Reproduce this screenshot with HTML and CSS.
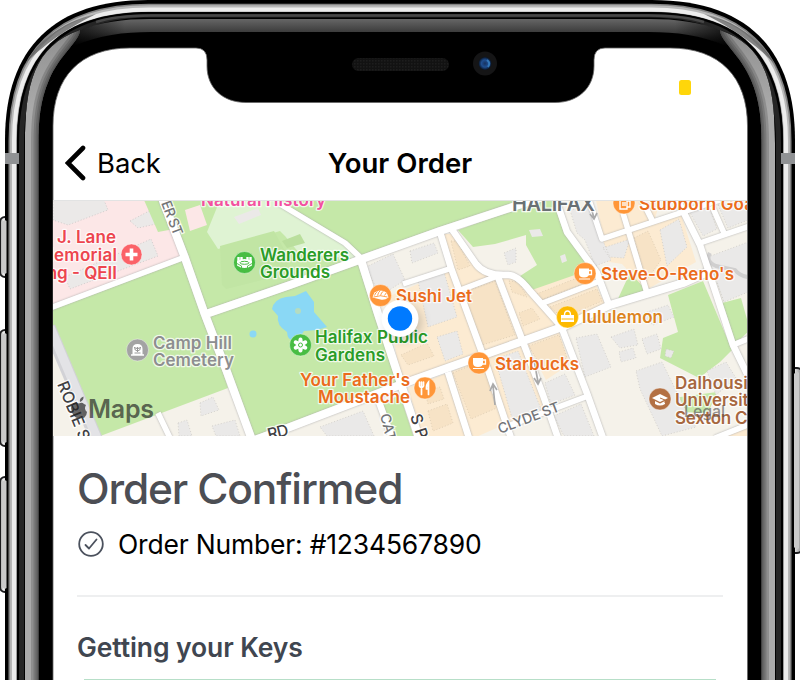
FILE: index.html
```html
<!DOCTYPE html>
<html lang="en">
<head>
<meta charset="utf-8">
<title>Your Order</title>
<link rel="stylesheet" href="styles.css">
</head>
<body>
<main class="device">
  <svg class="frame" viewBox="0 0 800 680" aria-hidden="true">
    <defs>
      <linearGradient id="btn" x1="0" x2="1"><stop offset="0" stop-color="#999"/><stop offset=".3" stop-color="#eee"/><stop offset="1" stop-color="#888"/></linearGradient>
      <linearGradient id="topGlass" gradientUnits="userSpaceOnUse" x1="0" y1="18" x2="0" y2="46"><stop offset="0" stop-color="#696969"/><stop offset=".5" stop-color="#3c3c3c"/><stop offset="1" stop-color="#000"/></linearGradient>
      <linearGradient id="fade" gradientUnits="userSpaceOnUse" x1="78" x2="125"><stop offset="0" stop-color="#000" stop-opacity=".6"/><stop offset="1" stop-color="#000" stop-opacity="0"/></linearGradient>
      <linearGradient id="sideL" gradientUnits="userSpaceOnUse" x1="25" x2="38.5"><stop offset="0" stop-color="#aaa"/><stop offset=".35" stop-color="#a6a6a6"/><stop offset="1" stop-color="#505050"/></linearGradient>
      <linearGradient id="tip" gradientUnits="userSpaceOnUse" x1="0" y1="28" x2="0" y2="110"><stop offset="0" stop-color="#888"/><stop offset=".35" stop-color="#999"/><stop offset="1" stop-color="#aaa"/></linearGradient>
      <path id="shell" d="M5 700V140C5 47 55 0 148 0H652C745 0 795 47 795 140V700Z"/>
      <path id="inner" d="M19 700V143C19 55 63 14 151 14H649C737 14 781 55 781 143V700Z"/>
      <radialGradient id="lens"><stop offset="0" stop-color="#17325f"/><stop offset=".55" stop-color="#1f4f91"/><stop offset="1" stop-color="#091426"/></radialGradient>
      <pattern id="mesh" width="3" height="3" patternUnits="userSpaceOnUse"><rect width="3" height="3" fill="#121212"/><rect width="1.5" height="1.5" fill="#1d1d1d"/></pattern>
      <clipPath id="wedge"><path d="M25 700V144C25 84 34 46 80 30C80 41 60 54 49 80C40 101 38.500 120 38.500 144V700Z"/></clipPath>
      <g id="sideShine" clip-path="url(#wedge)">
        <path d="M25 700V144C25 84 34 46 80 30V45L60 90L45 130V700Z" fill="url(#tip)"/>
        <g fill="none" stroke="#222" stroke-opacity=".2">
          <path d="M38.500 700V144C38.500 120 40 101 49 80C60 54 80 41 80 30" stroke-width="15"/>
          <path d="M38.500 700V144C38.500 120 40 101 49 80C60 54 80 41 80 30" stroke-width="10"/>
          <path d="M38.500 700V144C38.500 120 40 101 49 80C60 54 80 41 80 30" stroke-width="6"/>
          <path d="M38.500 700V144C38.500 120 40 101 49 80C60 54 80 41 80 30" stroke-width="2.500"/>
        </g>
      </g>
    </defs>
    <g fill="url(#btn)" stroke="#1d1d1f" stroke-width="2">
      <rect x="0" y="217" width="12" height="60" rx="5"/>
      <rect x="0" y="330" width="12" height="116" rx="5"/>
      <rect x="0" y="477" width="12" height="115" rx="5"/>
      <rect x="790" y="368" width="12" height="185" rx="5"/>
    </g>
    <use href="#shell"/>
    <g fill="#c9c9c9">
      <path d="M2 222Q5 219 6.500 221V273Q5 275 2 272ZM2 335Q5 332 6.500 334V442Q5 444 2 441ZM2 482Q5 479 6.500 481V588Q5 590 2 587ZM794 374Q797 370 799 373V548Q797 551 794 547Z"/>
    </g>
    <g fill="none">
      <path d="M12.800 700V141C12.800 51 60 8 149 8H651C740 8 787.200 51 787.200 141V700" stroke="#858585" stroke-width="8.600"/>
      <path d="M13.300 700V141C13.300 51 61 8.500 149 8.500H651C739 8.500 786.700 51 786.700 141V700" stroke="#b9b9b9" stroke-width="6.400"/>
      <path d="M14 700V141C14 52 61 9.400 149 9.400H651C739 9.400 786 52 786 141V700" stroke="#ededed" stroke-width="4"/>
      <path d="M21 72C34 44 60 22 96 14C76 24 48 40 24 65Z" fill="#555" opacity=".7"/>
      <path d="M779 72C766 44 740 22 704 14C724 24 752 40 776 65Z" fill="#555" opacity=".7"/>
    </g>
    <path d="M17 700V142C17 52 62 12 150 12H650C738 12 783 52 783 142V700Z"/>
    <use href="#inner" fill="#252525"/>
    <path d="M96 22C112 17 130 15.500 151 15.500H649C670 15.500 688 17 704 22" fill="none" stroke="#484848" stroke-width="2.500"/>
    <path d="M24 700V143C24 59 66 17.500 151 17.500H649C734 17.500 776 59 776 143V700Z"/>
    <path d="M78 31C100 22 123 19 151 19H649C677 19 700 22 722 31L727 46C700 35 677 32 649 32H151C123 32 100 35 73 46Z" fill="url(#topGlass)"/>
    <path d="M78 31C95 24 110 21 125 20V34C105 35 90 40 73 46Z" fill="url(#fade)"/>
    <path d="M78 31C95 24 110 21 125 20V34C105 35 90 40 73 46Z" fill="url(#fade)" transform="matrix(-1 0 0 1 800 0)"/>
    <use href="#sideShine"/>
    <use href="#sideShine" transform="matrix(-1 0 0 1 800 0)"/>
    <path d="M5 153H19V164H5ZM781 153H795V164H781Z" fill="#909294"/>
    <path d="M53 700V126C53 77 80 48 130 48H196Q207 48 207 60V66C207 88 223 102.500 246 102.500H555C578 102.500 594 88 594 66V60Q594 48 605 48H670C720 48 747.500 77 747.500 126V700Z" fill="#fff" stroke="#666" stroke-width=".8"/>
    <rect x="352" y="58" width="97" height="13" rx="6.500" fill="url(#mesh)"/>
    <circle cx="485" cy="63.500" r="12" fill="#151516"/>
    <circle cx="485" cy="63.500" r="6.500" fill="url(#lens)"/>
    <path d="M487 60Q491 63 488 67" stroke="#3478b8" stroke-width="2" fill="none"/>
  </svg>

  <div class="screen">
    <div class="status"><span class="battery"></span></div>
    <header class="nav">
      <a class="back"><svg width="21" height="36" viewBox="0 0 21 36"><path d="M18 3L3 18L18 33" fill="none" stroke="#000" stroke-width="4.600" stroke-linecap="round" stroke-linejoin="miter"/></svg><span>Back</span></a>
      <h1>Your Order</h1>
    </header>

    <svg class="map" viewBox="53 200 695 236">
      <defs>
        <filter id="soft" x="-100%" y="-100%" width="300%" height="300%"><feGaussianBlur stdDeviation="6"/></filter>
        <g id="roads">
          <path stroke-width="5.500" d="M50 308L185 257M280 204L345 243L362 259M403 284L449 269M458 291L500 275M543 303L600 281M500 429L588 396M589 200L602 239L683 212L720 200M623 213L647 293M642 200L653 222M700 243L750 226M712 206L724 233M733 345L750 338M715 438L750 424M158 413L170 438"/>
          <path stroke-width="6.500" d="M440 232L451 268L484 358L511 438M451 228L476 264Q485 276 507 275Q517 274 530 291L561 326L588 396L603 438M498 277L523 342L543 395L558 438M448 372L469 438M379 402L392 438M556 200L567 232L597 273L609 305M675 195L700 245L733 345L750 380"/>
          <path stroke-width="8" d="M162 198L185 258L204 312L227 372L252 440M206 314L290 285L362 259L440 231L546 196M361 260L378 314L403 390L419 438M252 441L290 427L405 383L523 341L565 326L610 305L683 283L712 270"/>
        </g>
        <g id="cup" fill="#fff"><path d="M-6-5H4V0Q4 4-1 4T-6 0Z"/><path d="M4-3H6.500V1H3" fill="none" stroke="#fff" stroke-width="1.300"/><path d="M-6 5H5V6H-6Z"/></g>
      </defs>
      <rect x="53" y="200" width="695" height="236" fill="#f5f2ea"/>
      <path fill="#fce7e7" d="M53 200H162L184 257L53 307Z"/>
      <g fill="#ebe9e8" stroke="#c9c4c4" stroke-width=".8" stroke-dasharray="1 2">
        <path d="M53 200H104L108 210L68 225L53 220Z"/>
        <path d="M130 221L151 210L156 224L138 228ZM124 251L151 239L158 256L70 289L65 277Z"/>
      </g>
      <g fill="#c5e8a8">
        <path d="M53 308L184 258L204 312L228 388L95 438L53 335Z"/>
        <path d="M144 200H540L362 260L206 314L184 255L174 229L158 232Z"/>
        <path d="M206 316L361 262L402 387L252 441Z"/>
        <path d="M458 230L540 200H556L567 232L588 259L577 275L533 292L517 278L537 265L526 245V235L495 244L473 247Z"/>
        <path d="M668 295L703 281L732 350L720 362L699 378L660 358L663 338L678 332Z"/>
        <path d="M722 303L741 298L750 330L735 344ZM635 262L645 292L616 303ZM673 398L717 392L708 413L681 412ZM382 403L400 395L414 438H396Z"/>
      </g>
      <path fill="#fce7e7" d="M185 210L200 205L207 225L190 231Z"/>
      <path fill="#dff3d3" d="M207 232L220 200H278L350 247L359 259L300 254L285 236L280 231L218 249Z"/>
      <path fill="#c1e5a4" d="M220 246L274 231L290 260L282 275L226 289L222 285Z"/>
      <path fill="#badf9d" d="M282 241L300 234L305 243L287 248Z"/>
      <path fill="#ebe9e8" d="M234 217L258 208L261 215L239 224ZM529 230L540 229L543 236L532 237ZM560 256L565 254L567 261L562 263Z"/>
      <path fill="#8ad8f5" d="M272 309Q274 299 286 297L295 296L306 291L314 302L314 312L327 327L317 330L304 331L300 337Q288 345 287 332Q276 325 278 316Z"/>
      <circle cx="298" cy="311" r="3" fill="#b5dcc0"/><circle cx="253" cy="334" r="3.500" fill="#8ad8f5"/>
      <g fill="#fcebd2">
        <path d="M385 298L453 269L444 234L454 234L478 269L501 279L523 340L402 383Z"/>
        <path d="M408 388L522 344L548 405L474 438H423ZM501 276L514 277L560 325L525 340Z"/>
        <path d="M529 291L589 270L605 304L564 323ZM602 239L681 214L696 262L646 290L622 264L597 260ZM596 200H660L655 219L603 236ZM527 344L559 332L570 364L546 380ZM727 436L748 427V436Z"/>
      </g>
      <g fill="#f7e3c6" stroke="#d6c5ad" stroke-width=".7" stroke-dasharray="1 2">
        <path d="M461 293L495 281L515 335L482 345ZM401 355L427 343L434 356L408 365ZM453 373L481 361L499 407L471 419ZM534 295L587 274L591 281L541 300ZM550 307L597 289L602 301L563 318ZM529 346L559 335L567 358L541 367ZM634 238L648 231L661 260L646 281Z"/>
        <path d="M451 241L457 241L470 266L458 270ZM425 392L440 387L444 399L428 404ZM428 411L447 404L453 423L433 431ZM509 281L519 282L527 297L512 292ZM519 313L532 308L540 319L523 326Z"/>
      </g>
      <g fill="#eae9e8" stroke="#c8c5c0" stroke-width=".7" stroke-dasharray="1 2">
        <path d="M366 267L393 254L405 280L380 296ZM410 251L434 243L438 253L412 263ZM418 281L444 272L457 317L428 327ZM437 337L457 331L463 354L445 361Z"/>
        <path d="M504 253L516 248V262L508 265ZM570 210L592 205L599 231L611 260L595 266L585 240L577 233ZM603 248L630 239L624 258L609 257ZM660 230L679 219L687 247L667 266ZM688 209L708 202L717 229L703 236ZM718 205L748 200V220L728 228ZM708 257L748 242V292L724 302Z"/>
        <path d="M576 338L597 334L611 367L585 377ZM611 337L634 329L638 345L620 348ZM619 352L633 348L636 358L621 362ZM642 339L657 334L661 349L647 354ZM636 371L662 362L683 405L696 427L662 436L640 389ZM641 314L668 305L674 317L653 325ZM666 349L674 351L671 358L665 356Z"/>
        <path d="M495 359L518 351L541 409L512 418ZM545 383L565 374L575 395L551 404ZM554 416L581 404L594 436H564ZM200 403L213 397L219 410L201 416ZM212 426L235 420L240 436H216ZM178 423L187 420L192 436H179ZM320 427L363 411L374 436H327ZM707 371L726 362L736 378L716 395Z"/>
      </g>
      <path d="M710 253Q705 261 716 266L735 270Q740 276 748 277" fill="none" stroke="#d0cfcf" stroke-width="4"/>
      <path d="M49 327L98 443" stroke="#d2d2d6" stroke-width="13"/><path d="M50 327L99 443" stroke="#e3e3e6" stroke-width="9"/>
      <use class="casing" href="#roads"/>
      <use class="road" href="#roads"/>
      <path d="M495 405L493 386M490 391L493 384L497 390M534 360L538 382M534 378L538 384L541 378M590 204L594 218M590 214L594 219L597 213" fill="none" stroke="#aaa" stroke-width="1.700"/>

      <g class="street">
        <text transform="translate(161 203) rotate(69)" textLength="36">ER ST</text>
        <text transform="translate(57 384) rotate(68)" class="major" textLength="62">ROBIE S</text>
        <text transform="translate(269 440) rotate(-14)" class="major" textLength="21">RD</text>
        <text transform="translate(380 415) rotate(76)">CATH</text>
        <text transform="translate(410 416) rotate(72)" class="major">S PARK</text>
        <text transform="translate(500 434) rotate(-21)" textLength="65">CLYDE ST</text>
        <text x="512" y="211" class="city" textLength="83">HALIFAX</text>
      </g>
      <g class="place">
        <g fill="#ed454e"><text x="57" y="243" textLength="59">J. Lane</text><text x="38" y="260.500" textLength="79">Memorial</text><text x="117" y="278.500" text-anchor="end">Building - QEII</text></g>
        <text x="201" y="205.500" textLength="125" fill="#f350a0">Natural History</text>
        <g fill="#2a9c28"><text x="260" y="260.500" textLength="89">Wanderers</text><text x="260" y="278" textLength="70">Grounds</text><text x="315" y="343" textLength="113">Halifax Public</text><text x="315" y="360.500" textLength="70">Gardens</text></g>
        <g fill="#8d8e90"><text x="153" y="348.500" textLength="79">Camp Hill</text><text x="153" y="366" textLength="81">Cemetery</text></g>
        <g fill="#eb6c1c"><text x="396" y="302" textLength="76">Sushi Jet</text><text x="300" y="386" textLength="110">Your Father's</text><text x="318" y="403" textLength="92">Moustache</text><text x="495" y="369.500" textLength="84">Starbucks</text><text x="601" y="280" textLength="133">Steve-O-Reno's</text><text x="639" y="209.500" textLength="115">Stubborn Goa</text></g>
        <text x="582" y="323" textLength="81" fill="#dc8420">lululemon</text>
        <g fill="#a7673f"><text x="675" y="388.500" textLength="83">Dalhousie</text><text x="675" y="406" textLength="84">University</text><text x="675" y="423.500" textLength="127">Sexton Campus</text></g>
      </g>
      <g stroke="#fff" stroke-opacity=".6" stroke-width=".7">
        <circle cx="131.500" cy="254.500" r="10.500" fill="#fb6268"/>
        <g fill="#48bd43"><circle cx="244.500" cy="262.500" r="11"/><circle cx="300.500" cy="345" r="11"/></g>
        <circle cx="137.500" cy="350" r="11" fill="#a3a3a3"/>
        <g fill="#ff9638"><circle cx="380.500" cy="295.500" r="11"/><circle cx="425" cy="388" r="11"/><circle cx="479" cy="363" r="11"/><circle cx="585" cy="273.500" r="11"/><circle cx="624" cy="203" r="11"/></g>
        <circle cx="567.500" cy="317" r="11" fill="#fdb900"/><circle cx="660" cy="399" r="11" fill="#b37043"/>
      </g>
      <path d="M131.500 248.500V260.500M125.500 254.500H137.500" stroke="#fff" stroke-width="3.600"/>
      <g transform="translate(244.500 262.500)" fill="none" stroke="#fff"><path d="M-7.500-2Q0-5 7.500-2V3Q0 8-7.500 3Z" fill="#fff" stroke="none"/><path d="M-6-2V-5.500M6-2V-5.500M-3-2V-5.500M3-2V-5.500" stroke-width="2.400"/><ellipse cy=".3" rx="4.500" ry="1.500" stroke="#48bd43"/><path d="M-7.500 1L-3 3.500V6M7.500 1L3 3.500V6" stroke="#48bd43" stroke-width=".9"/></g>
      <g transform="translate(300.500 345)"><g fill="#fff"><ellipse cy="-4.500" rx="2.100" ry="3"/><ellipse cy="4.500" rx="2.100" ry="3"/><g transform="rotate(60)"><ellipse cy="-4.500" rx="2.100" ry="3"/><ellipse cy="4.500" rx="2.100" ry="3"/></g><g transform="rotate(120)"><ellipse cy="-4.500" rx="2.100" ry="3"/><ellipse cy="4.500" rx="2.100" ry="3"/></g><circle r="4"/></g><circle r="2" fill="none" stroke="#48bd43"/></g>
      <g transform="translate(137.500 350)"><path d="M-5 5V-1Q-5-6 0-6T5-1V5Z" fill="#fff"/><path d="M-6.500 5H6.500" stroke="#fff" stroke-width="1.500"/><path d="M0-3V2M-3-3Q-3 1 0 1Q3 1 3-3L1-1L0-3L-1-1ZM-3 3H3" fill="none" stroke="#999"/></g>
      <g transform="translate(380.500 295.500)"><path d="M-8 2Q-7-5 0-5T8 2Q4 5 0 4T-8 2Z" fill="#fff"/><path d="M-6 0Q-5-3-3-4M-3 0Q-2-4 0-5M0 0Q1-4 3-4M4 0L6-3M-7 1.500Q0-1 7 1.500" stroke="#ff9638" stroke-width=".9" fill="none"/></g>
      <g transform="translate(425 388)" fill="none" stroke="#fff" stroke-width="1.700" stroke-linecap="round"><path d="M-5.500-6V-2Q-5-.5-3.500-.5Q-2-.5-1.500-2V-6M-3.500-6V6.500M3.500 6.500V-6Q1-3 1.500 1H3.500"/></g>
      <use href="#cup" x="479" y="363"/><use href="#cup" x="585" y="273.500"/>
      <g transform="translate(624 203)" fill="none" stroke="#fff" stroke-width="1.400"><path d="M-4-4H3V6H-4ZM3-2H6V4H3M-1-1V3M1-1V3"/></g>
      <g transform="translate(567.500 317)"><path d="M-6.500-2H6.500V5H-6.500Z" fill="#fff"/><path d="M-3-2Q-3-6 0-6T3-2" fill="none" stroke="#fff" stroke-width="1.400"/><path d="M-6 2H6" stroke="#fdb900"/></g>
      <g transform="translate(660 399)"><path d="M0-5L8-1L0 3L-8-1ZM-5 2L0 4.500L5 2V5Q0 8-5 5Z" fill="#fff"/><path d="M0-1L5 1V4" fill="none" stroke="#b37043"/></g>
      <g class="credit"><path d="M84 404Q82 402 79 403.500Q72 401 71 408Q72 416 77 418L80.500 417L84 418Q87 415 87 412Q83.500 409 86 405ZM80 402Q79 398 83.500 396.500Q84 400 80 402Z"/><text x="88" y="417.500" textLength="66">Maps</text></g>
      <text x="684" y="417" class="legal" textLength="41">Legal</text>
      <circle cx="404" cy="322" r="17" fill="#000" opacity=".22" filter="url(#soft)"/>
      <circle cx="400" cy="318.500" r="18.500" fill="#fff"/><circle cx="400" cy="318.500" r="12.200" fill="#007aff"/>
      <path d="M53 200.500H748" stroke="#e2e3e3"/>
    </svg>

    <section class="order">
      <h2>Order Confirmed</h2>
      <p class="number"><svg width="26" height="26" viewBox="0 0 26 26" fill="none" stroke="#4b515d" stroke-width="1.800" stroke-linecap="round" stroke-linejoin="round"><circle cx="13" cy="13" r="11.800"/><path d="M7.500 14L11 17.500L18.500 8.500"/></svg><span>Order Number: #1234567890</span></p>
      <h3>Getting your Keys</h3>
      <div class="keys"></div>
    </section>
  </div>
</main>
</body>
</html>
```
FILE: styles.css
```css
* { box-sizing: border-box; }
body { margin: 0; background: #fff; font-family: Inter, "Liberation Sans", sans-serif; color: #000; }
.device { position: relative; width: 800px; height: 680px; overflow: hidden; }
.frame { position: absolute; inset: 0; width: 800px; height: 680px; }
.screen { position: relative; width: 694px; height: 680px; margin-left: 53px; overflow: hidden; }
.status { height: 126px; padding: 80px 56px 0 0; display: flex; justify-content: flex-end; }
.battery { width: 12.500px; height: 14.500px; border-radius: 2.500px; background: #ffd60a; }
.nav { height: 74px; display: grid; grid-template-columns: 1fr auto 1fr; align-items: center; padding: 0 12px; }
.back { display: flex; align-items: center; gap: 11px; font-size: 27.500px; letter-spacing: -.1px; }
.nav h1 { margin: 0; font-size: 27.500px; font-weight: 600; letter-spacing: .05px; }
.map { display: block; width: 695px; height: 236px; }
.casing { fill: none; stroke: #dfdddd; stroke-linejoin: round; filter: drop-shadow(0 0 .8px #aaa); }
.road { fill: none; stroke: #fff; stroke-linejoin: round; }
.place text { font-size: 17px; font-weight: 600; paint-order: stroke; stroke: #fff; stroke-opacity: .75; stroke-width: 2.500px; stroke-linejoin: round; }
.street text { font-size: 14px; font-weight: 500; fill: #737477; paint-order: stroke; stroke: #fff; stroke-opacity: .8; stroke-width: 2.500px; }
.street .major { font-size: 16px; fill: #3f4043; }
.street .city { font-size: 20px; font-weight: 600; fill: #6a7074; }
.credit { fill: #222; fill-opacity: .68; font-size: 25px; font-weight: 600; }
.legal { font-size: 16px; font-weight: 500; fill: #555; fill-opacity: .65; }
.order { width: 694px; padding: 28px 24px 0; }
.order h2 { margin: 0; font-size: 42.500px; line-height: 49px; font-weight: 500; letter-spacing: -1.150px; color: #4c4e54; }
.number { display: flex; align-items: flex-start; gap: 14px; margin: 0; padding: 13px 0 0 1px; height: 81.500px; font-size: 26.500px; line-height: 36px; letter-spacing: -.2px; }
.number svg { margin-top: 5px; }
.order h3 { margin: 0; padding-top: 31px; border-top: 2px solid #eeeff0; font-size: 26.500px; line-height: 38px; font-weight: 600; letter-spacing: -.1px; color: #404650; }
.keys { height: 20px; margin: 13.500px 7px 0; border-top: 2px solid #b7dfc8; }
```
